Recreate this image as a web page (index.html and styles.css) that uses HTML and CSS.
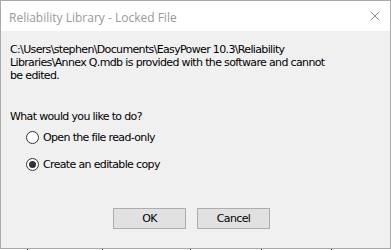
FILE: index.html
```html
<!DOCTYPE html>
<html lang="en">
  <head>
    <meta charset="UTF-8" />
    <title>Reliability Library - Locked File</title>
    <link rel="stylesheet" href="styles.css">
  </head>
  <body>
    <div class="window">
      <div class="titlebar">
        <span class="title">Reliability Library - Locked File</span>
        <svg class="close" width="10" height="10" viewBox="0 0 10 10">
          <path d="M0.5 0.5 L9.5 9.5 M9.5 0.5 L0.5 9.5" stroke="#8a8a8a" stroke-width="1" fill="none" />
        </svg>
      </div>
      <div class="content">
        <p class="message">C:\Users\stephen\Documents\EasyPower 10.3\Reliability Libraries\Annex Q.mdb is provided with the software and cannot be edited.</p>
        <p class="question">What would you like to do?</p>
        <label class="option"><span class="radio"></span>Open the file read-only</label>
        <label class="option"><span class="radio checked"></span>Create an editable copy</label>
        <div class="buttons">
          <button class="btn">OK</button>
          <button class="btn">Cancel</button>
        </div>
      </div>
    </div>
    <div class="behind">
      <span class="tick t1"></span>
      <span class="tick t2"></span>
      <span class="tick t3"></span>
      <span class="tick t4"></span>
      <span class="tick t5"></span>
    </div>
  </body>
</html>
```
FILE: styles.css
```css
body {
  margin: 0;
  width: 391px;
  height: 250px;
  background: #fff;
  overflow: hidden;
}

.window {
  width: 391px;
  height: 249px;
  box-sizing: border-box;
  border: 1px solid #a9a9a9;
  display: flex;
  flex-direction: column;
  font-family: "DejaVu Sans", sans-serif;
}

.titlebar {
  height: 30px;
  background: #fff;
  display: flex;
  align-items: center;
  justify-content: space-between;
  padding: 0 10px 0 8px;
}

.title {
  font-family: "Open Sans", "Noto Sans", sans-serif;
  font-size: 12px;
  color: #999;
  margin-top: 2px;
}

.close {
  display: block;
}

.content {
  flex: 1;
  background: #f0f0f0;
  padding: 12px 0 0 9px;
  display: flex;
  flex-direction: column;
  font-size: 11px;
  letter-spacing: -0.65px;
  color: #000;
}

.message {
  margin: 0;
  width: 322px;
  line-height: 13px;
}

.question {
  margin: 28px 0 0 0;
  line-height: 13px;
}

.option {
  display: flex;
  align-items: center;
  gap: 4px;
  margin: 0 0 0 16px;
  height: 27px;
}

.option:first-of-type {
  margin-top: 1px;
}

.radio {
  width: 11px;
  height: 11px;
  border: 1px solid #333;
  border-radius: 50%;
  background: #fff;
  display: flex;
  align-items: center;
  justify-content: center;
}

.radio.checked::after {
  content: "";
  width: 7px;
  height: 7px;
  border-radius: 50%;
  background: #333;
}

.buttons {
  display: flex;
  gap: 11px;
  margin: 30px 0 0 103px;
}

.btn {
  width: 73px;
  height: 21px;
  box-sizing: border-box;
  background: #e1e1e1;
  border: 1px solid #adadad;
  font-family: "DejaVu Sans", sans-serif;
  font-size: 11px;
  letter-spacing: -0.65px;
  color: #000;
  padding: 0;
}

.behind {
  height: 1px;
  position: relative;
}

.tick {
  position: absolute;
  top: 0;
  width: 1px;
  height: 1px;
  background: #222;
}

.t1 { left: 27px; }
.t2 { left: 102px; }
.t3 { left: 190px; }
.t4 { left: 261px; }
.t5 { left: 331px; }
```
